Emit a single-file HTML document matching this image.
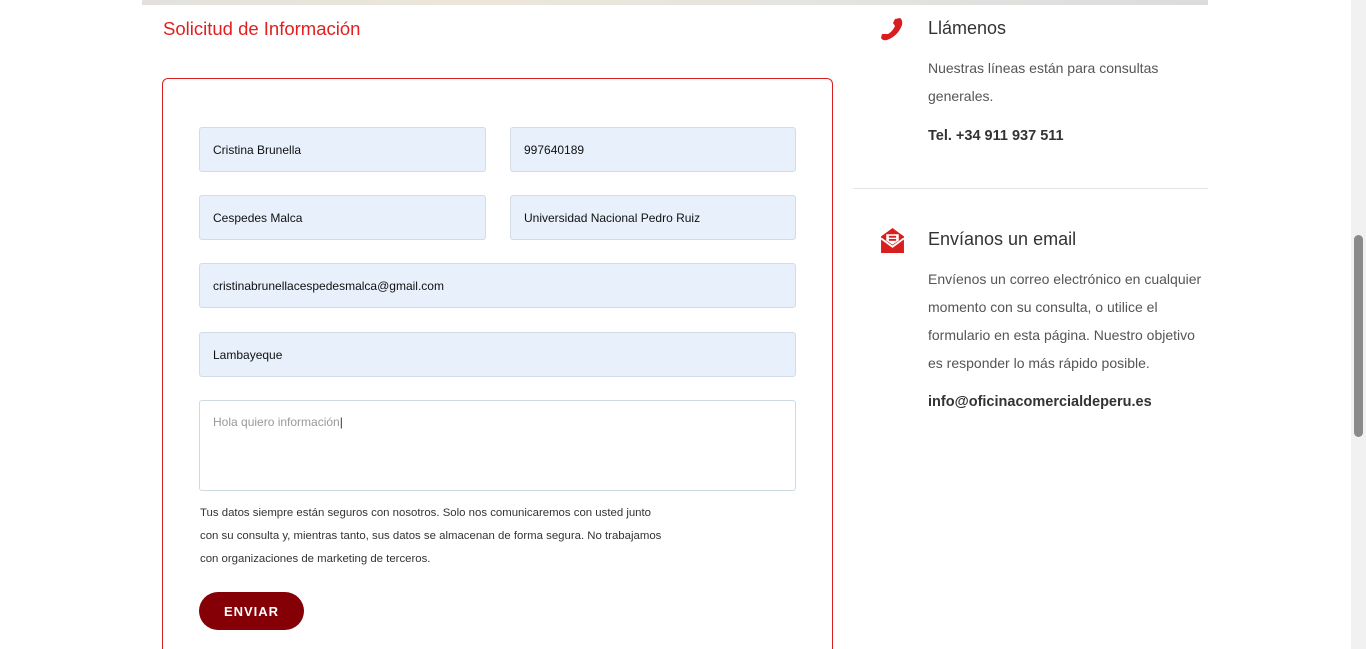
<!DOCTYPE html>
<html><head><meta charset="utf-8">
<style>
*{margin:0;padding:0;box-sizing:border-box}
html,body{width:1366px;height:649px;overflow:hidden;background:#fff;font-family:"Liberation Sans",sans-serif;position:relative}
.map{position:absolute;left:142px;top:0;width:1066px;height:5px;background:linear-gradient(90deg,#e3e1dc,#ece6d8 30%,#e6e4df 60%,#dcdcdc)}
.sb{position:absolute;right:0;top:0;width:15px;height:649px;background:#f1f1f1}
.thumb{position:absolute;left:3px;top:235px;width:9px;height:202px;background:#8a8a8a;border-radius:5px}
.title{position:absolute;left:163px;top:18px;color:#e02020;font-size:18.5px}
.card{position:absolute;left:162px;top:78px;width:671px;height:571px;border:1px solid #d92020;border-bottom:none;border-radius:6px 6px 0 0}
.in{position:absolute;background:#e8f0fc;border:1px solid #d5dbe3;border-radius:3px;font-size:12px;color:#111;padding-left:13px;display:flex;align-items:center;height:45px}
.ta{position:absolute;left:199px;top:400px;width:597px;height:91px;border:1px solid #cfdbe3;border-radius:3px;font-size:12px;color:#999;padding:14px 13px}
.note{position:absolute;left:200px;top:502px;font-size:11.4px;line-height:23px;color:#333}
.btn{position:absolute;left:199px;top:592px;width:105px;height:38px;border-radius:19px;background:#850006;color:#fff;font-weight:bold;font-size:13px;letter-spacing:1px;display:flex;align-items:center;justify-content:center}
.h{position:absolute;left:928px;font-size:18px;color:#333}
.p{position:absolute;left:928px;font-size:14px;line-height:28px;color:#555}
.b{position:absolute;left:928px;font-size:14.5px;font-weight:bold;color:#333}
.hr{position:absolute;left:853px;top:188px;width:355px;height:1px;background:#e2e2e2}
</style></head><body>
<div class="map"></div>
<div class="title">Solicitud de Información</div>
<div class="card"></div>
<div class="in" style="left:199px;top:127px;width:287px">Cristina Brunella</div>
<div class="in" style="left:510px;top:127px;width:286px">997640189</div>
<div class="in" style="left:199px;top:195px;width:287px">Cespedes Malca</div>
<div class="in" style="left:510px;top:195px;width:286px">Universidad Nacional Pedro Ruiz</div>
<div class="in" style="left:199px;top:263px;width:597px">cristinabrunellacespedesmalca@gmail.com</div>
<div class="in" style="left:199px;top:332px;width:597px">Lambayeque</div>
<div class="ta">Hola quiero información<span style="color:#333">|</span></div>
<div class="note">Tus datos siempre están seguros con nosotros. Solo nos comunicaremos con usted junto<br>con su consulta y, mientras tanto, sus datos se almacenan de forma segura. No trabajamos<br>con organizaciones de marketing de terceros.</div>
<div class="btn">ENVIAR</div>

<svg style="position:absolute;left:880px;top:17px" width="24" height="25" viewBox="0 0 24 25"><path d="M15 2 L20 1 Q23 3 22 8 Q18 19 7 23 Q3 24 1 21 L2 17 L8 17 Q13 14 15 9 L13 6 Z" fill="#d81e1e"/></svg>
<div class="h" style="top:18px">Llámenos</div>
<div class="p" style="top:54px">Nuestras líneas están para consultas<br>generales.</div>
<div class="b" style="top:128px">Tel. +34 911 937 511</div>
<div class="hr"></div>
<svg style="position:absolute;left:880px;top:228px" width="25" height="25" viewBox="0 0 24 24"><path d="M1 8 L8 3 L12 0 L16 3 L23 8 L23 24 L1 24 Z" fill="#d81e1e"/><path d="M1 10 L12 18 L23 10" fill="none" stroke="#fff" stroke-width="1.8"/><path d="M6 6 L18 6 L18 12 L12 16 L6 12 Z" fill="#fff"/><rect x="8.5" y="7.5" width="7" height="1.8" fill="#d81e1e"/><rect x="8.5" y="10.5" width="7" height="1.8" fill="#d81e1e"/></svg>
<div class="h" style="top:229px">Envíanos un email</div>
<div class="p" style="top:265px">Envíenos un correo electrónico en cualquier<br>momento con su consulta, o utilice el<br>formulario en esta página. Nuestro objetivo<br>es responder lo más rápido posible.</div>
<div class="b" style="top:394px">info@oficinacomercialdeperu.es</div>
<div class="sb"><div class="thumb"></div></div>
</body></html>
